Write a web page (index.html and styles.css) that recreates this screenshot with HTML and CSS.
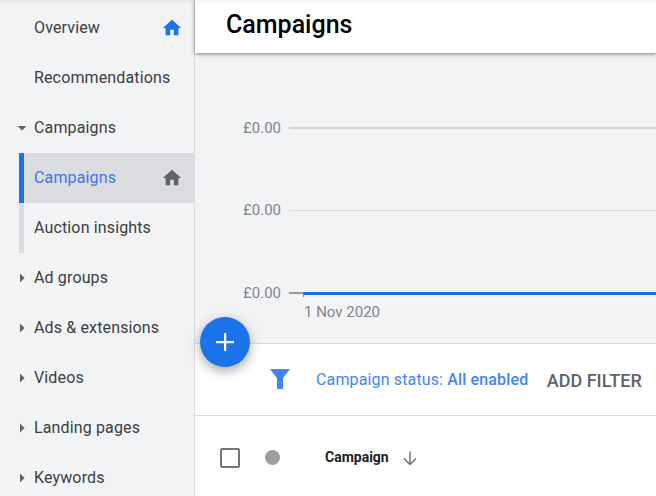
FILE: index.html
```html
<!DOCTYPE html>
<html lang="en">
<head>
<meta charset="utf-8">
<title>Campaigns</title>
<link rel="stylesheet" href="styles.css">
</head>
<body>
<div class="app">
  <nav class="sidebar">
    <a class="item"><span class="label">Overview</span><svg class="home home-blue" viewBox="0 0 24 24"><path d="M10 20v-6h4v6h5v-8h3L12 3 2 12h3v8z"/></svg></a>
    <a class="item"><span class="label">Recommendations</span></a>
    <a class="item"><svg class="caret" viewBox="0 0 12 12"><path d="M1.5 4h9L6 8.5z"/></svg><span class="label">Campaigns</span></a>
    <div class="subgroup">
      <a class="item sub selected"><span class="label">Campaigns</span><svg class="home" viewBox="0 0 24 24"><path d="M10 20v-6h4v6h5v-8h3L12 3 2 12h3v8z"/></svg></a>
      <a class="item sub"><span class="label">Auction insights</span></a>
    </div>
    <a class="item"><svg class="caret" viewBox="0 0 12 12"><path d="M4 1.5v9L8.5 6z"/></svg><span class="label">Ad groups</span></a>
    <a class="item"><svg class="caret" viewBox="0 0 12 12"><path d="M4 1.5v9L8.5 6z"/></svg><span class="label">Ads &amp; extensions</span></a>
    <a class="item"><svg class="caret" viewBox="0 0 12 12"><path d="M4 1.5v9L8.5 6z"/></svg><span class="label">Videos</span></a>
    <a class="item"><svg class="caret" viewBox="0 0 12 12"><path d="M4 1.5v9L8.5 6z"/></svg><span class="label">Landing pages</span></a>
    <a class="item"><svg class="caret" viewBox="0 0 12 12"><path d="M4 1.5v9L8.5 6z"/></svg><span class="label">Keywords</span></a>
  </nav>
  <main class="main">
    <header class="header"><h1 class="title">Campaigns</h1></header>
    <section class="chart">
      <div class="row row-first"><span class="money">£0.00</span><span class="line line-strong"></span></div>
      <div class="row"><span class="money">£0.00</span><span class="line"></span></div>
      <div class="row row-axis"><span class="money">£0.00</span><span class="stub"></span><span class="series"></span></div>
      <div class="date">1 Nov 2020</div>
    </section>
    <section class="filters">
      <svg class="funnel" viewBox="0 0 20 20"><path d="M0 0h20l-7 9.2V20H7V9.2z"/></svg>
      <span class="status">Campaign status: <b>All enabled</b></span>
      <span class="add">ADD FILTER</span>
    </section>
    <section class="thead">
      <span class="check"></span>
      <span class="dot"></span>
      <span class="col">Campaign</span>
      <svg class="arrow" viewBox="0 0 14 15"><path d="M7 .5V13.5M1 7.5l6 6 6-6" fill="none" stroke="#757575" stroke-width="1.5"/></svg>
    </section>
  </main>
  <button class="fab" aria-label="Add"><svg viewBox="0 0 18 18"><path d="M8 0h2.2v8H18v2.2h-7.8V18H8v-7.8H0V8h8z"/></svg></button>
  <div class="top-shade"></div>
</div>
</body>
</html>
```
FILE: styles.css
```css
* { box-sizing: border-box; }
html, body { margin: 0; height: 100%; }
body { font-family: Roboto, sans-serif; overflow: hidden; background: #fff; }
.app { position: relative; display: flex; width: 656px; height: 496px; overflow: hidden; }
.sidebar { flex: 0 0 195px; padding-top: 3px; background: #f1f3f4; border-right: 1px solid #dadce0; }
.item { display: flex; align-items: center; height: 50px; padding: 0 11px 0 34px; position: relative; color: #3c4043; font-size: 16px; letter-spacing: .14px; }
.label { flex: 1; margin-top: -2px; }
.home { width: 22px; height: 22px; margin-right: .5px; fill: #5f6368; }
.home-blue { fill: #1a73e8; }
.caret { position: absolute; left: 16px; top: 19px; width: 12px; height: 12px; fill: #5f6368; }
.subgroup { margin-left: 19px; border-left: 5px solid #dadce0; }
.sub { padding-left: 10px; }
.selected { margin-left: -5px; padding-left: 10px; border-left: 5px solid #1a73e8; background: #dadce0; color: #3b78e7; }
.main { flex: 1; display: flex; flex-direction: column; min-width: 0; }
.header { position: relative; z-index: 1; flex: 0 0 53px; display: flex; align-items: center; padding-left: 31px; background: #fff; box-shadow: 0 1px 4px rgba(0,0,0,.5); }
.title { margin: 0 0 5px; font-size: 25px; font-weight: 500; color: #000; }
.chart { flex: 0 0 291px; padding: 65px 0 0 47px; background: #f1f3f4; border-bottom: 1px solid #dadce0; font-size: 15px; color: #80868b; }
.row { display: flex; align-items: center; height: 20px; margin-bottom: 63px; }
.row-first { margin-bottom: 62px; }
.row-axis { margin-bottom: 0; }
.money { flex: 0 0 39px; margin-right: 8px; text-align: right; }
.line { flex: 1; height: 1px; background: #dadce0; }
.line-strong { height: 2px; background: #d2d4d7; }
.stub { position: relative; flex: 0 0 14px; height: 2px; background: #999; }
.stub::after { content: ""; position: absolute; right: -1px; top: 0; width: 1px; height: 5px; background: #80868b; }
.series { flex: 1; height: 3px; background: #1a73e8; }
.date { margin: 0 0 0 62px; line-height: 18px; }
.filters { flex: 0 0 72px; display: flex; align-items: center; padding-left: 75px; border-bottom: 1px solid #dadce0; background: #fff; }
.funnel { width: 20px; height: 20px; margin-top: -1px; fill: #4285f4; }
.status { margin: 0 0 0 26px; font-size: 16px; letter-spacing: .14px; color: #4285f4; }
.status b { font-weight: 500; }
.add { margin: 2px 0 0 18.5px; font-size: 18px; font-weight: 500; color: #5f6368; }
.thead { flex: 1; display: flex; align-items: flex-start; padding: 32px 0 0 25px; background: #fff; }
.check { width: 20px; height: 20px; border: 2px solid #757575; border-radius: 2px; }
.dot { width: 15px; height: 15px; margin: 2px 0 0 25px; border-radius: 50%; background: #9e9e9e; }
.col { margin: 1px 0 0 45px; font-size: 14px; font-weight: 700; color: #202124; }
.arrow { width: 14px; height: 15px; margin: 3px 0 0 14px; }
.fab { position: absolute; left: 200px; top: 317px; width: 50px; height: 50px; padding: 0; display: flex; align-items: center; justify-content: center; border: 0; border-radius: 50%; background: #1a73e8; box-shadow: 0 4px 12px rgba(0,0,0,.35); z-index: 2; }
.fab svg { width: 18px; height: 18px; fill: #fff; }
.top-shade { position: absolute; left: 0; right: 0; top: 0; height: 4px; background: linear-gradient(rgba(0,0,0,.05), rgba(0,0,0,0)); z-index: 3; }
```
